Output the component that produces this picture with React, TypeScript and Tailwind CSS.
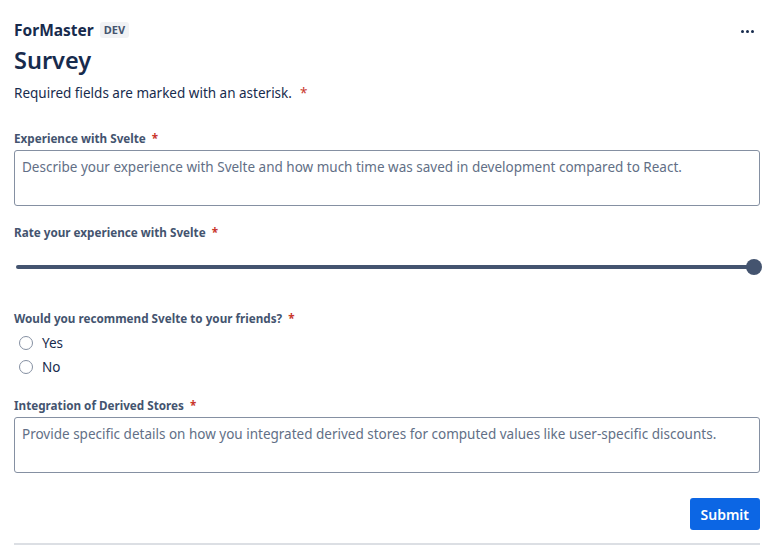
import React, { useState } from 'react';

const Label: React.FC<{ text: string }> = ({ text }) => (
  <div className="text-[11.7px] font-bold leading-4 text-[#44546f]">
    {text}
    <span className="ml-1.5 text-[#c9372c]">*</span>
  </div>
);

export default function App() {
  const [rating, setRating] = useState(100);
  const [choice, setChoice] = useState<string | null>(null);

  return (
    <div className="min-h-[556px] bg-white pl-[14px] pr-[8px] pt-[20px] text-[#172b4d] [font-family:'Noto_Sans',sans-serif]">
      <div className="flex items-start justify-between">
        <div className="flex items-center gap-1.5">
          <span className="text-[15.5px] font-bold leading-5">ForMaster</span>
          <span className="rounded-[3px] bg-[#f1f2f4] px-1 text-[11px] font-bold leading-4 text-[#44546f]">DEV</span>
        </div>
        <button className="mr-[6px] mt-[3px] flex h-4 items-center gap-[2px]">
          <span className="h-[3px] w-[3px] rounded-full bg-[#172b4d]" />
          <span className="h-[3px] w-[3px] rounded-full bg-[#172b4d]" />
          <span className="h-[3px] w-[3px] rounded-full bg-[#172b4d]" />
        </button>
      </div>
      <h1 className="mt-[6px] text-[23.5px] font-semibold leading-7">Survey</h1>
      <p className="mt-[9px] text-[13.5px] leading-5">
        Required fields are marked with an asterisk.
        <span className="ml-2 text-[#c9372c]">*</span>
      </p>

      <div className="mt-[27px]">
        <Label text="Experience with Svelte" />
        <textarea
          className="mt-[4px] block h-[56px] w-full resize-none rounded-[3px] border border-[#8590a2] px-[7px] py-[6px] text-[13.5px] leading-5 placeholder:text-[#626f86] outline-none"
          placeholder="Describe your experience with Svelte and how much time was saved in development compared to React."
        />
      </div>

      <div className="mt-[18px]">
        <Label text="Rate your experience with Svelte" />
        <div className="relative mt-[19px] h-4">
          <div className="absolute left-[2px] right-[6px] top-[6px] h-[4px] rounded-full bg-[#44546f]" />
          <div
            className="absolute top-0 h-4 w-4 rounded-full bg-[#44546f]"
            style={{ left: `calc(${rating}% - 14px)` }}
          />
          <input
            type="range"
            min={0}
            max={100}
            value={rating}
            onChange={e => setRating(Number(e.target.value))}
            className="absolute inset-0 w-full opacity-0"
          />
        </div>
      </div>

      <div className="mt-[35px]">
        <Label text="Would you recommend Svelte to your friends?" />
        <div className="mt-[7px] flex flex-col gap-1">
          {['Yes', 'No'].map(opt => (
            <label key={opt} className="flex h-5 items-center gap-[9px] pl-[5px] text-[13.5px]">
              <span
                onClick={() => setChoice(opt)}
                className={`h-[14px] w-[14px] rounded-full border bg-white ${choice === opt ? 'border-[4px] border-[#0c66e4]' : 'border-[#8590a2]'}`}
              />
              {opt}
            </label>
          ))}
        </div>
      </div>

      <div className="mt-[20px]">
        <Label text="Integration of Derived Stores" />
        <textarea
          className="mt-[4px] block h-[56px] w-full resize-none rounded-[3px] border border-[#8590a2] px-[7px] py-[6px] text-[13.5px] leading-5 placeholder:text-[#626f86] outline-none"
          placeholder="Provide specific details on how you integrated derived stores for computed values like user-specific discounts."
        />
      </div>

      <div className="mt-[25px] flex justify-end">
        <button className="h-8 rounded-[3px] bg-[#0c66e4] px-[11px] text-[14px] font-semibold text-white">Submit</button>
      </div>
      <div className="mt-[13px] h-[2px] bg-[#dcdfe4]" />
    </div>
  );
}
